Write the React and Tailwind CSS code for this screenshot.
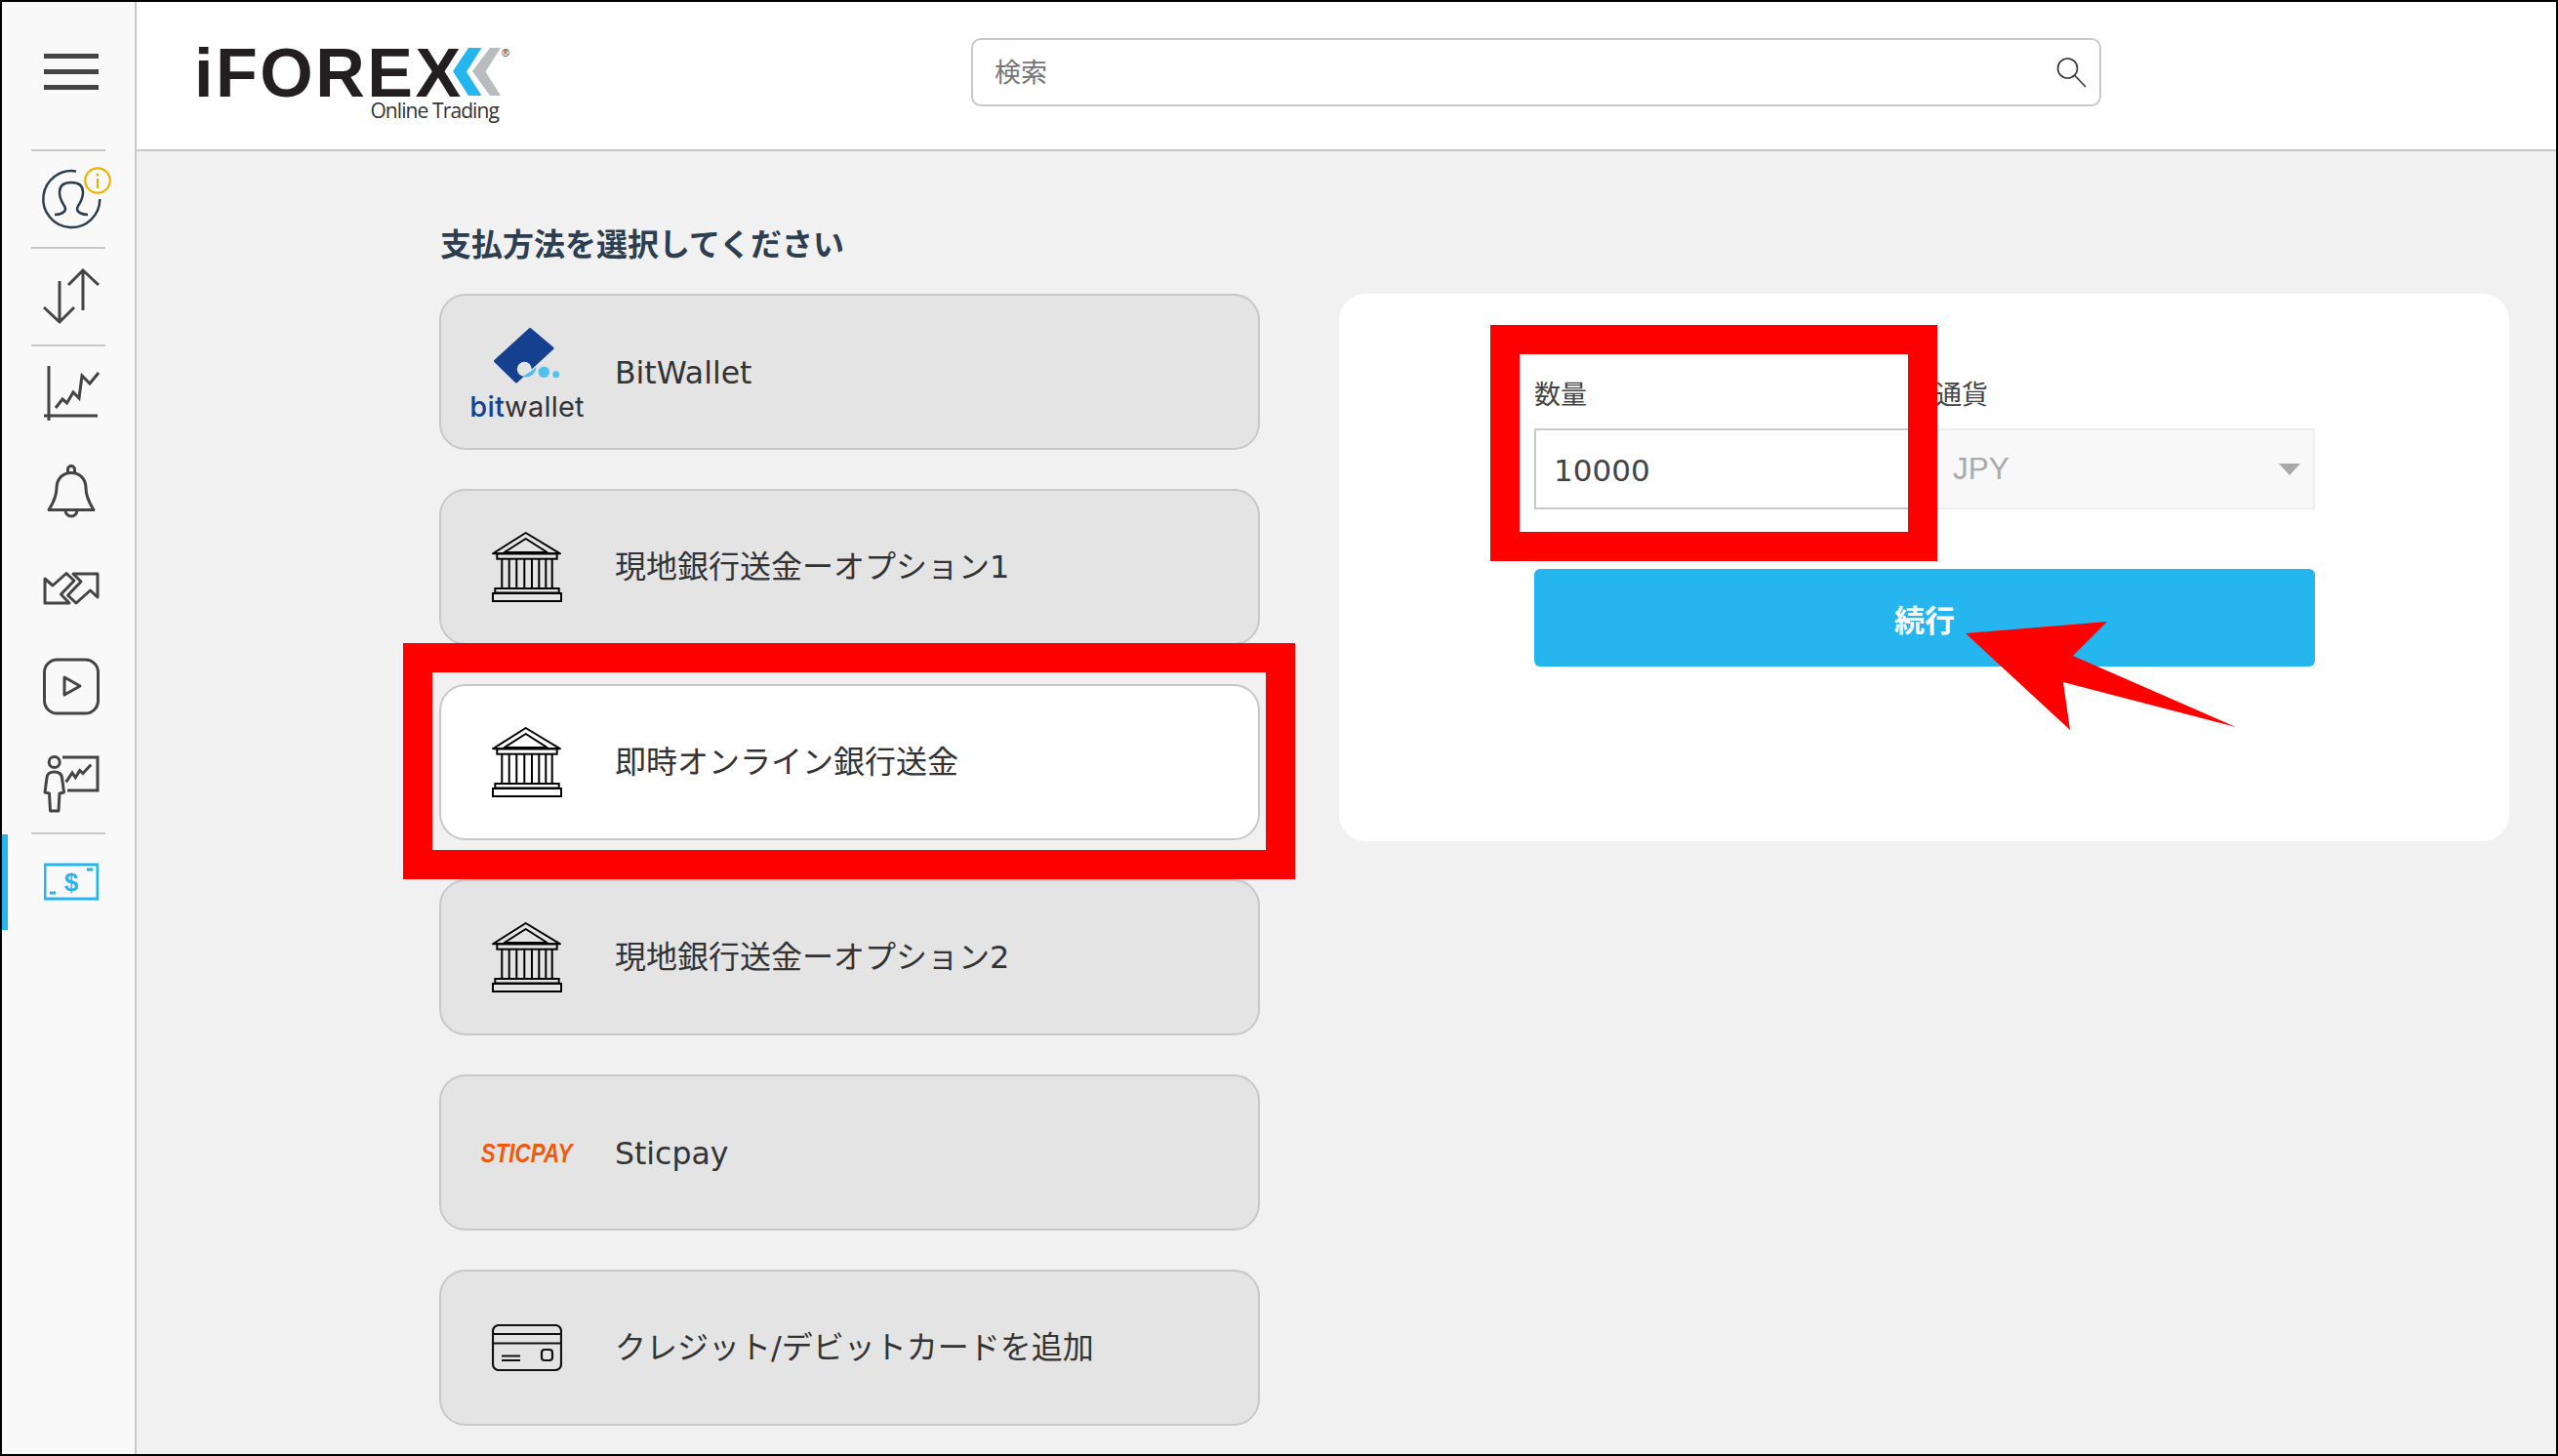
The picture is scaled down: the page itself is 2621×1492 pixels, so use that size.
const FONT = "font-['DejaVu_Sans','Noto_Sans_CJK_JP',sans-serif]";

function Divider() {
  return <div className="mx-[30px] h-[2px] bg-[#c8c8c8]" />;
}

function NavItem({ h, children }) {
  return (
    <div className="pl-[43px] flex" style={{ height: h }}>
      <svg width="56" height={h} viewBox={`0 0 56 ${h}`} className="overflow-visible" fill="none" stroke="#444" strokeWidth="3">
        {children}
      </svg>
    </div>
  );
}

function Sidebar() {
  return (
    <aside className="relative w-[138px] shrink-0 bg-[#f9f9f9] border-r-2 border-[#c8c8c8] flex flex-col">
      <div className="h-[151px] pl-[43px] pt-[53px] flex flex-col gap-[11px]">
        <div className="w-[56px] h-[5px] bg-[#444]" />
        <div className="w-[56px] h-[5px] bg-[#444]" />
        <div className="w-[56px] h-[5px] bg-[#444]" />
      </div>
      <Divider />
      <NavItem h={98}>
        <path d="M33 20.4A29 29 0 1 0 57.3 49" stroke="#2b3e50" strokeWidth="2.5" />
        <path d="M11 65C16 65 22 63 22 59C22 55 16 52 16 42C16 35 21 32 28 32C35 32 40 35 40 42C40 52 34 55 34 59C34 63 40 65 45 65" stroke="#2b3e50" strokeWidth="2.5" />
        <circle cx="55" cy="30" r="12.7" stroke="#f0b000" strokeWidth="2.2" />
        <circle cx="55" cy="24" r="1.6" fill="#f0b000" stroke="none" />
        <path d="M55 28V38" stroke="#f0b000" strokeWidth="2.2" />
      </NavItem>
      <Divider />
      <NavItem h={98}>
        <path d="M40 22V63M25 37L40 22L56 37" />
        <path d="M16 33V75M0 60L16 75L31 60" />
      </NavItem>
      <Divider />
      <NavItem h={100}>
        <path d="M5 20V76M0 71H55" />
        <path d="M12 63L19 54L23.6 58L30 47L36 53L39 30L47 38L56 27" />
      </NavItem>
      <NavItem h={100}>
        <path d="M5 67.5H51C45 58 43 52 43 45C43 36 37 29.5 28 29.5C19 29.5 13 36 13 45C13 52 11 58 5 67.5Z" strokeLinejoin="round" />
        <path d="M24.5 29V26a3.5 3.5 0 0 1 7 0V29" />
        <path d="M22 68a6 6 0 0 0 12 0" />
      </NavItem>
      <NavItem h={100}>
        <path d="M30 33H55V57L47.5 50L33 63L24.5 55L38 41Z" strokeLinejoin="round" />
        <path d="M1 63V38L9 45L23 32.5L31 40L17.5 54L26 63Z" strokeLinejoin="round" />
      </NavItem>
      <NavItem h={100}>
        <rect x="0.5" y="21" width="55" height="55" rx="13" />
        <path d="M21 39L37 48L21 57Z" strokeLinejoin="round" />
      </NavItem>
      <NavItem h={98}>
        <circle cx="10.7" cy="26" r="5.5" />
        <path d="M10.7 36C5 36 3.5 38 3 42L1 57L5.5 58L6.5 76H15L16 58L20.5 57L18.5 42C18 38 16 36 10.7 36Z" strokeLinejoin="round" />
        <path d="M19 21H55V55H24" />
        <path d="M22.7 46.4L29 37L32.3 41.8L36.7 34.6L40 37.5L48.3 28.6" />
      </NavItem>
      <Divider />
      <div className="pl-[43px] h-[100px] flex">
        <svg width="56" height="100" viewBox="0 0 56 100" fill="none" stroke="#25b6ef" strokeWidth="3">
          <rect x="1" y="31" width="54" height="35" />
          <path d="M44 36H50M6 60H12" />
          <text x="28" y="58" textAnchor="middle" fontFamily="'Liberation Sans',sans-serif" fontWeight="700" fontSize="26" fill="#25b6ef" stroke="none">$</text>
        </svg>
      </div>
      <div className="absolute left-0 top-[853px] w-[6px] h-[98px] bg-[#25b6ef]" />
    </aside>
  );
}

function Logo() {
  return (
    <div className="relative w-[324px] h-[78px] mt-[46px] shrink-0">
      <div className="flex h-[52px] items-center pt-[1px]">
        <span className="font-['Liberation_Sans',sans-serif] font-bold text-[70px] leading-[52px] tracking-[2.5px] text-[#231f20]">iFOREX</span>
      </div>
      <svg className="absolute left-[264px] top-0" width="60" height="52" viewBox="0 0 60 52">
        <polygon points="17,1 30.5,1 15,25.500 30.500,50 17,50 1,25" fill="#25b6ef" />
        <polygon points="39,1 50,1 34.5,25.500 50,50 39,50 21,25" fill="#b9bcbe" />
      </svg>
      <span className="absolute left-[315px] top-[-1px] text-[11px] leading-[14px] text-[#231f20] font-['Liberation_Sans',sans-serif]">®</span>
      <div className="absolute left-[180px] top-[52px] w-[132px] text-right whitespace-nowrap font-['Open_Sans',sans-serif] text-[21px] tracking-[-0.9px] leading-[26px] text-[#333]">Online Trading</div>
    </div>
  );
}

function Header() {
  return (
    <header className="h-[151px] box-content border-b-2 border-[#c8c8c8] bg-white flex pl-[59px] shrink-0">
      <Logo />
      <div className="ml-[472px] mt-[37px] w-[1158px] h-[70px] rounded-[10px] border-2 border-[#c8c8c8] flex items-center justify-between pl-[22px] pr-[12px]">
        <span className={`${FONT} text-[27px] text-[#757575] mt-[2px]`}>検索</span>
        <svg width="32" height="32" viewBox="0 0 32 32" fill="none" stroke="#333" strokeWidth="1.6" className="mt-[2px]">
          <circle cx="11.500" cy="11" r="10" />
          <path d="M18.500 18L30 30" />
        </svg>
      </div>
    </header>
  );
}

function BankIcon() {
  return (
    <svg width="72" height="72" viewBox="0 0 72 72" fill="none" stroke="#000" strokeWidth="2">
      <path d="M34.700 1L70 22.300H1Z" strokeLinejoin="round" />
      <path d="M34.700 7L12.700 21H56.700Z" strokeLinejoin="round" />
      <rect x="5.300" y="22.300" width="61.400" height="5.400" />
      <path d="M10.300 27.700V58M17.700 27.700V58M25.300 27.700V58M33.300 27.700V58M41 27.700V58M48.300 27.700V58M55.300 27.700V58M61.700 27.700V58" />
      <rect x="3.300" y="58" width="65.400" height="4.500" />
      <rect x="1" y="63" width="70" height="8" />
    </svg>
  );
}

function CardIcon() {
  return (
    <svg width="72" height="48" viewBox="0 0 72 48" fill="none" stroke="#111" strokeWidth="2.200">
      <rect x="1" y="1" width="70" height="46" rx="6" />
      <path d="M1 10H71M1 19.500H71" />
      <path d="M10 32.500H29M10 37H29" />
      <rect x="51" y="26" width="11" height="11" rx="3" />
    </svg>
  );
}

function BitWalletLogo() {
  return (
    <div className="flex flex-col items-center pt-[3px]">
      <svg width="68" height="58" viewBox="0 0 68 58">
        <path d="M37 1.500L60 21L23 55L1.500 34Z" fill="#15408f" stroke="#15408f" strokeWidth="3" strokeLinejoin="round" />
        <circle cx="31.300" cy="42.300" r="7.500" fill="#e4e4e4" />
        <path d="M29 50C34 47 39 44 43.500 40C43 47 37 52 29 50Z" fill="#4fc0ef" />
        <circle cx="51.300" cy="45.300" r="5.700" fill="#4fc0ef" />
        <circle cx="63.700" cy="47.700" r="3.400" fill="#4fc0ef" />
      </svg>
      <div className="font-['Inter',sans-serif] font-normal text-[29px] leading-[24px] mt-[11px] whitespace-nowrap tracking-[0.2px]">
        <span className="text-[#15408f] font-medium">bit</span>
        <span className="text-[#333]">wallet</span>
      </div>
    </div>
  );
}

function Sticpay() {
  return (
    <span className="inline-block mt-[2px] scale-x-[0.8] font-['Liberation_Sans',sans-serif] font-bold italic text-[28px] leading-[28px] text-[#f15a0a] whitespace-nowrap">STICPAY</span>
  );
}

function PayRow({ icon, label, active, latin }) {
  return (
    <div className={`h-[160px] rounded-[27px] border-2 border-[#c8c8c8] flex items-center pl-[28px] ${active ? "bg-white" : "bg-[#e4e4e4]"}`}>
      <div className="w-[120px] flex justify-center shrink-0">{icon}</div>
      <span className={`${FONT} ml-[30px] text-[#333] whitespace-nowrap ${latin ? "text-[31.5px] mt-[3px]" : "text-[32px]"}`}>{label}</span>
    </div>
  );
}

function Panel() {
  return (
    <section className="w-[1199px] h-[561px] rounded-[27px] bg-white pl-[200px] pt-[88px]">
      <div className="flex gap-[17px] w-[800px]">
        <div className="w-[394px]">
          <div className={`${FONT} text-[27px] leading-[32px] text-[#444] mb-[18px]`}>数量</div>
          <div className="h-[83px] border-2 border-[#c8c8c8] flex items-center pl-[18px] bg-white">
            <span className={`${FONT} text-[31px] text-[#444] mt-[4px]`}>10000</span>
          </div>
        </div>
        <div className="flex-1">
          <div className={`${FONT} text-[27px] leading-[32px] text-[#444] mb-[18px]`}>通貨</div>
          <div className="h-[83px] border-2 border-[#eeeeee] bg-[#f8f8f8] flex items-center justify-between pl-[16px] pr-[13px]">
            <span className="font-['Liberation_Sans',sans-serif] text-[31.5px] text-[#aaaaaa]">JPY</span>
            <svg width="22" height="12" viewBox="0 0 22 12"><path d="M0 0H22L11 12Z" fill="#a9a9a9" /></svg>
          </div>
        </div>
      </div>
      <div className={`${FONT} mt-[61px] w-[800px] h-[100px] pt-[6px] rounded-[6px] bg-[#25b6ef] flex items-center justify-center text-white font-bold text-[31px]`}>続行</div>
    </section>
  );
}

export default function App() {
  const rows = [
    { icon: <BitWalletLogo />, label: "BitWallet", latin: true },
    { icon: <BankIcon />, label: "現地銀行送金ーオプション1" },
    { icon: <BankIcon />, label: "即時オンライン銀行送金", active: true },
    { icon: <BankIcon />, label: "現地銀行送金ーオプション2" },
    { icon: <Sticpay />, label: "Sticpay", latin: true },
    { icon: <CardIcon />, label: "クレジット/デビットカードを追加" },
  ];
  return (
    <div className="relative w-[2621px] h-[1492px] border-2 border-black flex overflow-hidden bg-[#f1f1f1]">
      <Sidebar />
      <div className="flex-1 flex flex-col min-w-0">
        <Header />
        <main className="flex-1 bg-[#f1f1f1] pl-[310px] pt-[76px]">
          <h1 className={`${FONT} h-[40px] mb-[30px] ml-[1px] text-[32px] leading-[40px] font-bold text-[#2c3e50]`}>支払方法を選択してください</h1>
          <div className="flex gap-[81px] items-start">
            <div className="w-[841px] flex flex-col gap-[40px]">
              {rows.map((r, i) => (
                <PayRow key={i} {...r} />
              ))}
            </div>
            <Panel />
          </div>
        </main>
      </div>
      <div className="absolute left-[411px] top-[657px] w-[914px] h-[242px] border-[30px] border-[#ff0000]" />
      <div className="absolute left-[1525px] top-[331px] w-[458px] h-[242px] border-[30px] border-[#ff0000]" />
      <svg className="absolute left-[2010px] top-[630px]" width="285" height="120" viewBox="0 0 285 120">
        <polygon points="2,17 147,5 112,40 279,113 102,67 109,116" fill="#ff0000" />
      </svg>
    </div>
  );
}
